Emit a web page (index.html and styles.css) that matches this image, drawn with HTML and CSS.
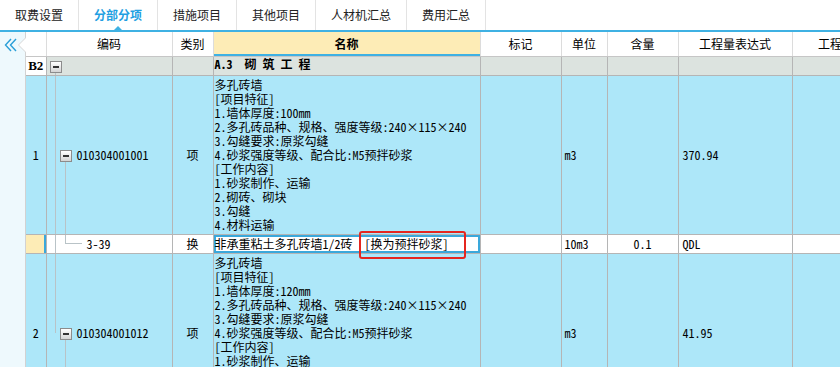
FILE: index.html
```html
<!DOCTYPE html>
<html>
	<head>
		<meta charset="utf-8">
		<title>分部分项</title>
		<link rel="stylesheet" href="styles.css">
	</head>
	<body>
		<div class="tabs">
			<div class="tab">取费设置</div>
			<div class="tab active">分部分项</div>
			<div class="tab">措施项目</div>
			<div class="tab">其他项目</div>
			<div class="tab">人材机汇总</div>
			<div class="tab">费用汇总</div>
		</div>
		<div class="main">
			<div class="side">
				<svg class="collapse" width="14" height="14" viewBox="0 0 14 14">
					<path d="M7 1 L1.5 7 L7 13 M12 1 L6.5 7 L12 13" fill="none" stroke="#2a9fd8" stroke-width="1.4"/>
				</svg>
			</div>
			<div class="grid-wrap">
				<table class="grid">
					<colgroup>
						<col class="c-num">
						<col class="c-code">
						<col class="c-type">
						<col class="c-name">
						<col class="c-mark">
						<col class="c-unit">
						<col class="c-qty">
						<col class="c-expr">
						<col class="c-amount">
					</colgroup>
					<thead>
						<tr>
							<th></th>
							<th>编码</th>
							<th>类别</th>
							<th class="h-name">名称</th>
							<th>标记</th>
							<th>单位</th>
							<th>含量</th>
							<th>工程量表达式</th>
							<th>工程量</th>
						</tr>
					</thead>
					<tbody>
						<tr class="part">
							<td class="num">B2</td>
							<td class="code"><span class="fold"></span><span class="line-root first"></span></td>
							<td></td>
							<td class="name"><b>A.3&nbsp;&nbsp;砌 筑 工 程</b></td>
							<td></td>
							<td></td>
							<td></td>
							<td></td>
							<td></td>
						</tr>
						<tr class="item">
							<td class="num">1</td>
							<td class="code"><span class="line-root"></span><span class="fold sub"></span>010304001001<span class="line-sub"></span></td>
							<td class="type">项</td>
							<td class="name">多孔砖墙<br>[项目特征]<br>1.墙体厚度:100mm<br>2.多孔砖品种、规格、强度等级:240×115×240<br>3.勾缝要求:原浆勾缝<br>4.砂浆强度等级、配合比:M5预拌砂浆<br>[工作内容]<br>1.砂浆制作、运输<br>2.砌砖、砌块<br>3.勾缝<br>4.材料运输</td>
							<td></td>
							<td class="unit">m3</td>
							<td></td>
							<td class="expr">370.94</td>
							<td></td>
						</tr>
						<tr class="sub-row">
							<td class="num current"></td>
							<td class="code"><span class="line-root"></span><span class="elbow"></span><span class="sub-code">3-39</span></td>
							<td class="type">换</td>
							<td class="name selected">非承重粘土多孔砖墙1/2砖&nbsp;&nbsp;[换为预拌砂浆]<span class="mark-box"></span></td>
							<td></td>
							<td class="unit">10m3</td>
							<td class="qty">0.1</td>
							<td class="expr">QDL</td>
							<td></td>
						</tr>
						<tr class="item">
							<td class="num">2</td>
							<td class="code"><span class="line-root last"></span><span class="fold sub"></span>010304001012<span class="line-sub"></span></td>
							<td class="type">项</td>
							<td class="name">多孔砖墙<br>[项目特征]<br>1.墙体厚度:120mm<br>2.多孔砖品种、规格、强度等级:240×115×240<br>3.勾缝要求:原浆勾缝<br>4.砂浆强度等级、配合比:M5预拌砂浆<br>[工作内容]<br>1.砂浆制作、运输<br>2.砌砖、砌块<br>3.勾缝<br>4.材料运输</td>
							<td></td>
							<td class="unit">m3</td>
							<td></td>
							<td class="expr">41.95</td>
							<td></td>
						</tr>
					</tbody>
				</table>
			</div>
		</div>
	</body>
</html>
```

FILE: styles.css
```css
* {
	margin: 0;
	padding: 0;
	box-sizing: border-box;
}

body {
	width: 840px;
	height: 367px;
	overflow: hidden;
	background-color: #fff;
	font-family: "Noto Sans CJK SC", sans-serif;
	font-size: 12px;
	color: #000;
}

/* 顶部页签 */
.tabs {
	display: flex;
	height: 32px;
	border-bottom: 2px solid #3fb1e3;
}

.tab {
	position: relative;
	padding: 0 15px;
	line-height: 30px;
	border-right: 1px solid #e3e3e3;
	color: #222;
	font-size: 12px;
	white-space: nowrap;
}

.tab.active {
	color: #1f9fe2;
	font-weight: bold;
}

.tab.active::after {
	content: "";
	position: absolute;
	left: 50%;
	bottom: 0;
	transform: translateX(-50%);
	border: 4px solid transparent;
	border-bottom-color: #3fb1e3;
	border-top-width: 0;
}

.main {
	display: flex;
	height: 335px;
}

/* 左侧收起栏 */
.side {
	position: relative;
	flex: 0 0 26px;
	background-color: #eef9fd;
	border-right: 1px solid #d2d2d2;
}

.collapse {
	position: absolute;
	left: 4px;
	top: 6px;
}

.side::before,
.side::after {
	content: "";
	position: absolute;
	top: 5px;
	right: -1px;
	border: 8px solid transparent;
	border-left-width: 0;
	border-right-color: #d6d6d6;
}

.side::after {
	top: 6px;
	right: -1px;
	border-width: 7px;
	border-left-width: 0;
	border-right-color: #fff;
}

.grid-wrap {
	flex: 1;
	overflow: hidden;
}

/* 表格 */
.grid {
	width: 854px;
	table-layout: fixed;
	border-collapse: collapse;
	font-family: "Noto Sans Mono CJK SC", "Noto Sans CJK SC", monospace;
	font-size: 12px;
	line-height: 14px;
}

.c-num { width: 20px; }
.c-code { width: 126px; }
.c-type { width: 41px; }
.c-name { width: 267px; }
.c-mark { width: 81px; }
.c-unit { width: 46px; }
.c-qty { width: 71px; }
.c-expr { width: 114px; }
.c-amount { width: 88px; }

.grid th {
	height: 24px;
	font-family: "Noto Sans CJK SC", sans-serif;
	font-weight: normal;
	text-align: center;
	border-left: 1px solid #dcdcdc;
	border-right: 1px solid #dcdcdc;
	border-bottom: 1px solid #c6c6c6;
	background-color: #fff;
}

.grid th:first-child {
	border-left: none;
}

.grid th.h-name {
	font-weight: bold;
	background-color: #fdecb6;
	box-shadow: inset 0 -2px 0 #3fb1e3;
}

.grid td {
	border: 1px solid #b5b5b5;
	padding: 2px 4px;
	vertical-align: middle;
	white-space: nowrap;
	overflow: hidden;
}

.grid td:first-child {
	border-left: none;
}

.grid tr.part td {
	height: 19px;
	padding-top: 0;
	padding-bottom: 0;
	background-color: #dce3df;
}

.grid tr.item td {
	background-color: #ade7f9;
}

.grid tr.sub-row td {
	height: 19px;
	padding-top: 0;
	padding-bottom: 0;
	background-color: #fff;
}

.grid td.num {
	background-color: #fff;
	text-align: center;
	padding: 0;
}

.grid tr.part td.num {
	background-color: #fff;
	font-weight: bold;
	font-family: "Liberation Serif", "Noto Sans Mono CJK SC", serif;
	font-size: 13px;
}

.grid tr.sub-row td.current {
	background-color: #fdecb6;
	box-shadow: inset -2px 0 0 #3aa8db;
}

.grid td.code {
	position: relative;
	padding-left: 13px;
}

.grid tr.part td.code {
	padding-left: 3px;
}

.fold {
	position: relative;
	display: inline-block;
	width: 12px;
	height: 12px;
	margin-right: 5px;
	vertical-align: -2px;
	border: 1px solid #8c8c8c;
	background: linear-gradient(#fff, #d4d4d4);
	z-index: 1;
}

.fold::after {
	content: "";
	position: absolute;
	left: 2px;
	right: 2px;
	top: 4px;
	height: 2px;
	background-color: #333;
}

/* 树形连接线 */
.line-root {
	position: absolute;
	left: 8px;
	top: 0;
	bottom: 0;
	border-left: 1px solid #b9c3c7;
}

.line-root.first {
	top: 15px;
}

.line-root.last {
	bottom: 50%;
}

.line-sub {
	position: absolute;
	left: 18px;
	top: calc(50% + 6px);
	bottom: 0;
	border-left: 1px solid #b9c3c7;
}

.elbow {
	position: absolute;
	left: 18px;
	top: 0;
	width: 17px;
	height: 9px;
	border-left: 1px solid #b9c3c7;
	border-bottom: 1px solid #b9c3c7;
}

.sub-code {
	padding-left: 27px;
}

.grid td.type {
	text-align: center;
	font-family: "Noto Sans CJK SC", sans-serif;
}

.grid td.name {
	vertical-align: top;
	padding-left: 1px;
}

.grid tr.sub-row td.name {
	position: relative;
	vertical-align: middle;
	overflow: visible;
	box-shadow: inset 0 0 0 2px #3aa8db;
}

.mark-box {
	position: absolute;
	left: 145px;
	top: -4px;
	width: 107px;
	height: 28px;
	border: 2px solid #e5261f;
	border-radius: 3px;
}

.grid td.unit {
	padding-left: 3px;
}

.grid td.qty {
	text-align: center;
}

.grid td.expr {
	padding-left: 4px;
}
```
